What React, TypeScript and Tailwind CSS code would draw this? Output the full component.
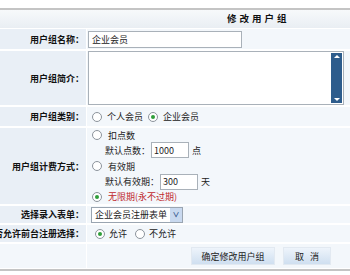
import React from "react";

const Radio = ({ checked = false }: { checked?: boolean }) => (
    <span className="inline-flex items-center justify-center w-[10px] h-[10px] rounded-full border border-[#8c949c] bg-white shrink-0">
        {checked && <span className="w-[4px] h-[4px] rounded-full bg-[#2f9e3a]" />}
    </span>
);

const Label = ({ children }: { children: React.ReactNode }) => (
    <div className="bg-[#e9eff6] flex items-center justify-end pr-[2px] overflow-hidden whitespace-nowrap font-bold text-[#111] text-[9px]">
        {children}
    </div>
);

const Cell = ({ children, className = "" }: { children: React.ReactNode; className?: string }) => (
    <div className={"bg-[#f3f7fb] flex items-center whitespace-nowrap " + className}>{children}</div>
);

const App = () => {
    return (
        <div
            className="w-[350px] h-[275px] bg-white overflow-hidden text-[9px] leading-none text-[#222]"
            style={{ fontFamily: '"Noto Sans CJK SC", "Liberation Sans", sans-serif' }}
        >
            <div className="h-[8px]" />
            <div className="w-[360px] border-t-2 border-[#c4c4c4]">
                {/* header */}
                <div className="h-[18px] bg-gradient-to-b from-[#f7f9fb] to-[#e9eef3] flex items-center pl-[227px]">
                    <span className="font-bold tracking-[3px] text-[#111] text-[9.5px]">修改用户组</span>
                </div>
                <div className="grid grid-cols-[86px_1fr] gap-y-[2px] gap-x-[1px] pt-[1px] bg-white">
                    {/* name */}
                    <Label>用户组名称：</Label>
                    <Cell className="h-[20px] pl-[1px]">
                        <div className="w-[154px] h-[17px] bg-white border border-[#a9b1b9] flex items-center px-[3px]">
                            企业会员
                        </div>
                    </Cell>

                    {/* intro */}
                    <Label>用户组简介：</Label>
                    <Cell className="h-[54px] pl-[1px]">
                        <div className="w-[256px] h-[54px] bg-white border border-[#a9b1b9] flex justify-end pr-[1px] py-[1px]">
                            <div className="w-[11px] h-full bg-[#2d5c8c] flex flex-col justify-between items-center py-[2px]">
                                <span className="w-0 h-0 border-l-[3px] border-r-[3px] border-b-[3px] border-l-transparent border-r-transparent border-b-white" />
                                <span className="w-0 h-0 border-l-[3px] border-r-[3px] border-t-[3px] border-l-transparent border-r-transparent border-t-white" />
                            </div>
                        </div>
                    </Cell>

                    {/* type */}
                    <Label>用户组类别：</Label>
                    <Cell className="h-[19px] pl-[5px] gap-[5px]">
                        <Radio />
                        <span>个人会员</span>
                        <Radio checked />
                        <span>企业会员</span>
                    </Cell>

                    {/* billing */}
                    <Label>用户组计费方式：</Label>
                    <Cell className="h-[76px] flex-col !items-start justify-center pl-[5px]">
                        <div className="flex items-center gap-[6px] h-[15px]">
                            <Radio />
                            <span>扣点数</span>
                        </div>
                        <div className="flex items-center h-[16px] pl-[13px]">
                            <span>默认点数：</span>
                            <span className="w-[38px] h-[16px] bg-white border border-[#a9b1b9] flex items-center px-[2px] ml-[1px]">1000</span>
                            <span className="ml-[3px]">点</span>
                        </div>
                        <div className="flex items-center gap-[6px] h-[15px] mt-[1px]">
                            <Radio />
                            <span>有效期</span>
                        </div>
                        <div className="flex items-center h-[16px] pl-[13px]">
                            <span>默认有效期：</span>
                            <span className="w-[38px] h-[16px] bg-white border border-[#a9b1b9] flex items-center px-[2px] ml-[1px]">300</span>
                            <span className="ml-[3px]">天</span>
                        </div>
                        <div className="flex items-center gap-[6px] h-[15px]">
                            <Radio checked />
                            <span className="text-[#c0282d]">无限期(永不过期)</span>
                        </div>
                    </Cell>

                    {/* form */}
                    <Label>选择录入表单：</Label>
                    <Cell className="h-[17px] pl-[4px]">
                        <div className="h-[16px] bg-white border border-[#9aa5b1] flex items-center">
                            <span className="px-[3px]">企业会员注册表单</span>
                            <span className="w-[12px] h-[14px] bg-[#c9d9ef] flex items-center justify-center text-[#2b4f86] text-[7px] font-bold">∨</span>
                        </div>
                    </Cell>

                    {/* allow */}
                    <Label>是否允许前台注册选择：</Label>
                    <Cell className="h-[17px] pl-[8px] gap-[4px]">
                        <Radio checked />
                        <span className="mr-[4px]">允许</span>
                        <Radio />
                        <span>不允许</span>
                    </Cell>

                    {/* buttons */}
                    <div className="bg-[#f3f7fb] h-[24px]" />
                    <Cell className="h-[24px] pl-[104px] gap-[8px]">
                        <button className="w-[84px] h-[18px] bg-gradient-to-b from-[#eef4fb] to-[#cfdff0] border border-[#e2e9f1] text-[#222] whitespace-nowrap">
                            确定修改用户组
                        </button>
                        <button className="w-[48px] h-[18px] bg-gradient-to-b from-[#eef4fb] to-[#cfdff0] border border-[#e2e9f1] text-[#222] tracking-[6px] pl-[6px] whitespace-nowrap">
                            取消
                        </button>
                    </Cell>
                </div>
                <div className="h-[2px] bg-[#c4c4c4] mt-[1px]" />
            </div>
        </div>
    );
};

export default App;
